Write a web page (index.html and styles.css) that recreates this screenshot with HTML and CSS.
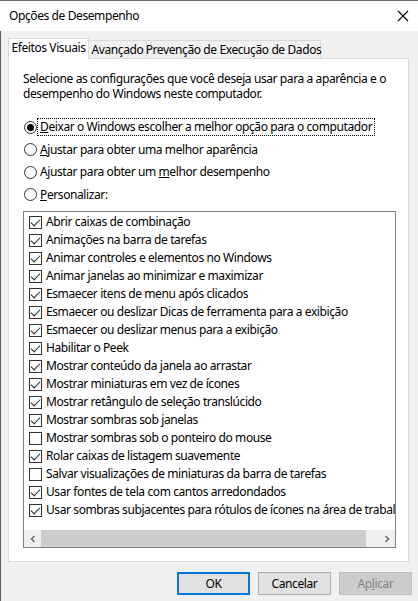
FILE: index.html
```html
<!DOCTYPE html>
<html lang="pt-BR">
<head>
<meta charset="utf-8">
<title>Opções de Desempenho</title>
<link rel="stylesheet" href="styles.css">
</head>
<body>
<div class="window">
  <div class="titlebar">
    <span class="title">Opções de Desempenho</span>
    <span class="close">
      <svg width="12" height="12" viewBox="0 0 12 12"><path d="M1 1 L11 11 M11 1 L1 11" stroke="#000" stroke-width="1.1" fill="none"/></svg>
    </span>
  </div>
  <div class="client">
    <div class="tabs">
      <div class="tab tab-1 active">Efeitos Visuais</div>
      <div class="tab tab-2">Avançado</div>
      <div class="tab tab-3">Prevenção de Execução de Dados</div>
    </div>
    <div class="panel">
      <p class="intro">Selecione as configurações que você deseja usar para a aparência e o desempenho do Windows neste computador.</p>
      <div class="radios">
        <div class="radio-row"><span class="radio checked"></span><span class="label focus"><u>D</u>eixar o Windows escolher a melhor opção para o computador</span></div>
        <div class="radio-row"><span class="radio"></span><span class="label"><u>A</u>justar para obter uma melhor aparência</span></div>
        <div class="radio-row"><span class="radio"></span><span class="label">Ajustar para obter um <u>m</u>elhor desempenho</span></div>
        <div class="radio-row"><span class="radio"></span><span class="label"><u>P</u>ersonalizar:</span></div>
      </div>
      <div class="listbox">
        <div class="items">
          <div class="item"><span class="cb on"></span><span class="txt">Abrir caixas de combinação</span></div>
          <div class="item"><span class="cb on"></span><span class="txt">Animações na barra de tarefas</span></div>
          <div class="item"><span class="cb on"></span><span class="txt">Animar controles e elementos no Windows</span></div>
          <div class="item"><span class="cb on"></span><span class="txt">Animar janelas ao minimizar e maximizar</span></div>
          <div class="item"><span class="cb on"></span><span class="txt">Esmaecer itens de menu após clicados</span></div>
          <div class="item"><span class="cb on"></span><span class="txt">Esmaecer ou deslizar Dicas de ferramenta para a exibição</span></div>
          <div class="item"><span class="cb on"></span><span class="txt">Esmaecer ou deslizar menus para a exibição</span></div>
          <div class="item"><span class="cb on"></span><span class="txt">Habilitar o Peek</span></div>
          <div class="item"><span class="cb on"></span><span class="txt">Mostrar conteúdo da janela ao arrastar</span></div>
          <div class="item"><span class="cb on"></span><span class="txt">Mostrar miniaturas em vez de ícones</span></div>
          <div class="item"><span class="cb on"></span><span class="txt">Mostrar retângulo de seleção translúcido</span></div>
          <div class="item"><span class="cb on"></span><span class="txt">Mostrar sombras sob janelas</span></div>
          <div class="item"><span class="cb"></span><span class="txt">Mostrar sombras sob o ponteiro do mouse</span></div>
          <div class="item"><span class="cb on"></span><span class="txt">Rolar caixas de listagem suavemente</span></div>
          <div class="item"><span class="cb"></span><span class="txt">Salvar visualizações de miniaturas da barra de tarefas</span></div>
          <div class="item"><span class="cb on"></span><span class="txt">Usar fontes de tela com cantos arredondados</span></div>
          <div class="item"><span class="cb on"></span><span class="txt">Usar sombras subjacentes para rótulos de ícones na área de trabalho</span></div>
        </div>
        <div class="hscroll">
          <span class="arrow"><svg width="8" height="8" viewBox="0 0 8 8"><path d="M5.5 1 L2.5 4 L5.5 7" stroke="#606060" stroke-width="1.4" fill="none"/></svg></span>
          <span class="thumb"></span>
          <span class="track"></span>
          <span class="arrow"><svg width="8" height="8" viewBox="0 0 8 8"><path d="M2.5 1 L5.5 4 L2.5 7" stroke="#606060" stroke-width="1.4" fill="none"/></svg></span>
        </div>
      </div>
    </div>
    <div class="buttons">
      <button class="btn default">OK</button>
      <button class="btn">Cancelar</button>
      <button class="btn disabled">Ap<u>l</u>icar</button>
    </div>
  </div>
</div>
</body>
</html>
```
FILE: styles.css
```css
* { box-sizing: border-box; }
html, body { margin: 0; padding: 0; }
body {
  font-family: "Noto Sans", "Liberation Sans", sans-serif;
  font-size: 12px;
  letter-spacing: -0.4px;
  color: #000;
  background: #f0f0f0;
}
.window {
  width: 418px;
  height: 601px;
  display: flex;
  flex-direction: column;
  border-top: 1px solid #6b6b6b;
  overflow: hidden;
}
.titlebar {
  height: 30px;
  background: #fff;
  display: flex;
  align-items: center;
  justify-content: space-between;
  padding: 0 0 0 9px;
  flex: none;
}
.title { font-size: 12px; line-height: 16px; }
.close {
  width: 46px;
  height: 30px;
  display: flex;
  align-items: center;
  justify-content: center;
  margin-right: -8px;
}
.close svg { display: block; }
.client {
  flex: 1;
  background: #f0f0f0;
  border-left: 1px solid #5a5a5a;
  padding: 7px 7px 0 7px;
  display: flex;
  flex-direction: column;
}
.tabs {
  display: flex;
  align-items: flex-end;
  height: 20px;
  position: relative;
  z-index: 1;
}
.tab {
  height: 18px;
  border: 1px solid #d9d9d9;
  border-bottom: none;
  border-left: none;
  background: #f0f0f0;
  display: flex;
  align-items: center;
  justify-content: center;
  white-space: nowrap;
  line-height: 16px;
}
.tab.active {
  height: 21px;
  margin-bottom: -1px;
  background: #fff;
  border-left: 1px solid #d9d9d9;
  padding-bottom: 2px;
}
.tab-1 { width: 81px; }
.tab-2 { width: 58px; }
.tab-3 { width: 174px; }
.panel {
  width: 401px;
  height: 504px;
  background: #fff;
  border: 1px solid #d9d9d9;
  padding: 12px 0 0 14px;
  display: flex;
  flex-direction: column;
}
.intro {
  margin: 0;
  width: 375px;
  line-height: 15px;
}
.radios {
  margin-top: 15px;
  display: flex;
  flex-direction: column;
}
.radio-row {
  height: 22.5px;
  display: flex;
  align-items: center;
  padding-left: 1px;
}
.radio {
  width: 13px;
  height: 13px;
  border: 1px solid #333;
  border-radius: 50%;
  background: #fff;
  flex: none;
  display: flex;
  align-items: center;
  justify-content: center;
  margin-right: 2px;
}
.radio.checked::after {
  content: "";
  width: 7px;
  height: 7px;
  border-radius: 50%;
  background: #000;
}
.label {
  padding: 0 1px;
  line-height: 14px;
  white-space: nowrap;
}
.label.focus { outline: 1px dotted #000; outline-offset: 1px; }
.listbox {
  margin-top: 5px;
  width: 373px;
  height: 337px;
  border: 1px solid #828282;
  display: flex;
  flex-direction: column;
  overflow: hidden;
}
.items {
  flex: 1;
  overflow: hidden;
  padding-top: 1px;
}
.item {
  height: 18px;
  display: flex;
  align-items: center;
  padding-left: 5px;
  white-space: nowrap;
}
.cb {
  width: 13px;
  height: 13px;
  border: 1px solid #333;
  background: #fff;
  flex: none;
  margin-right: 4px;
  position: relative;
}
.cb.on::after {
  content: "";
  position: absolute;
  left: 3px;
  top: 0px;
  width: 4px;
  height: 8px;
  border-right: 1px solid #222;
  border-bottom: 1px solid #222;
  transform: rotate(45deg);
  transform-origin: center;
}
.txt { line-height: 16px; }
.hscroll {
  height: 17px;
  display: flex;
  background: #f0f0f0;
  flex: none;
}
.arrow {
  width: 17px;
  display: flex;
  align-items: center;
  justify-content: center;
  flex: none;
}
.thumb {
  width: 325px;
  background: #cdcdcd;
  flex: none;
}
.track { flex: 1; }
.buttons {
  display: flex;
  justify-content: flex-end;
  gap: 8px;
  margin-top: 10px;
  margin-right: -1px;
}
.btn {
  font-family: inherit;
  font-size: 12px;
  letter-spacing: -0.4px;
  width: 73px;
  height: 23px;
  background: #e1e1e1;
  border: 1px solid #adadad;
  color: #000;
  padding: 0;
  margin: 0;
}
.btn.default { border: 2px solid #0078d7; }
.btn.disabled { background: #cccccc; border-color: #bfbfbf; color: #838383; }
.btn u { text-decoration: underline; }
```
